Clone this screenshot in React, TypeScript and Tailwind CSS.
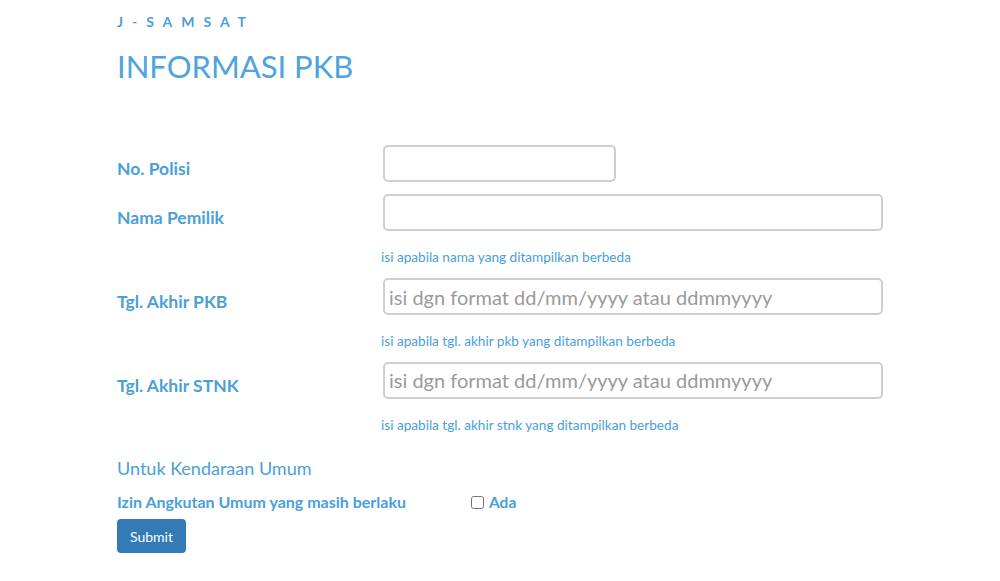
export default function App() {
  const labelCls = "w-[266px] shrink-0 pt-[11px] text-[17.5px] font-bold text-[#4a9fd8]";
  const inputCls =
    "h-[37px] rounded-[5px] border-2 border-[#cfcfcf] bg-white px-[4px] text-[20px] text-gray-700 placeholder:text-[#9a9a9a] focus:outline-none";
  const helpCls = "ml-[264px] text-[13.6px] text-[#4a9fd8]";

  return (
    <div className="min-h-screen bg-white font-['Lato',sans-serif] text-[#4a9fd8]">
      <div className="pl-[117px] pt-[11px]">
        <p className="text-[14px] font-bold tracking-[0.64em] text-[#4a9fd8]">J-SAMSAT</p>
        <h1 className="mt-[14px] text-[31px] leading-[40px] text-[#4da4df]">INFORMASI PKB</h1>

        <form className="mt-[59px]" onSubmit={(e) => e.preventDefault()}>
          <div className="flex items-center">
            <label className={labelCls}>No. Polisi</label>
            <input type="text" className={`${inputCls} w-[233px]`} />
          </div>

          <div className="mt-[12px] flex items-center">
            <label className={labelCls}>Nama Pemilik</label>
            <input type="text" className={`${inputCls} w-[500px]`} />
          </div>
          <p className={`${helpCls} mt-[15px]`}>isi apabila nama yang ditampilkan berbeda</p>

          <div className="mt-[11px] flex items-center">
            <label className={labelCls}>Tgl. Akhir PKB</label>
            <input
              type="text"
              placeholder="isi dgn format dd/mm/yyyy atau ddmmyyyy"
              className={`${inputCls} w-[500px]`}
            />
          </div>
          <p className={`${helpCls} mt-[16px]`}>isi apabila tgl. akhir pkb yang ditampilkan berbeda</p>

          <div className="mt-[10px] flex items-center">
            <label className={labelCls}>Tgl. Akhir STNK</label>
            <input
              type="text"
              placeholder="isi dgn format dd/mm/yyyy atau ddmmyyyy"
              className={`${inputCls} w-[500px]`}
            />
          </div>
          <p className={`${helpCls} mt-[16px]`}>isi apabila tgl. akhir stnk yang ditampilkan berbeda</p>

          <p className="mt-[20px] text-[18px] text-[#4a9fd8]">Untuk Kendaraan Umum</p>

          <div className="mt-[8px] flex items-center">
            <span className="w-[354px] shrink-0 text-[16px] font-bold">
              Izin Angkutan Umum yang masih berlaku
            </span>
            <label className="flex items-center gap-[5px] text-[15.5px] font-bold">
              <input type="checkbox" className="h-[13px] w-[13px]" />
              Ada
            </label>
          </div>

          <button
            type="submit"
            className="mt-[5px] h-[34px] w-[69px] rounded-[4px] bg-[#337ab7] text-[14px] text-white"
          >
            Submit
          </button>
        </form>
      </div>
    </div>
  );
}
